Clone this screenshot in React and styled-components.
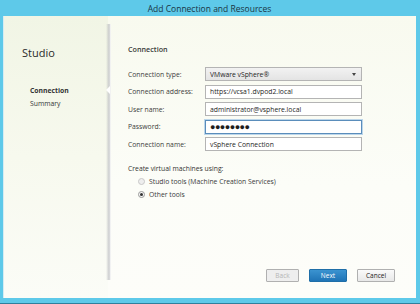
import React from 'react';
import styled, { createGlobalStyle } from 'styled-components';

const GlobalStyle = createGlobalStyle`
  html, body {
    margin: 0;
    padding: 0;
    background: #5cc7e8;
  }
  body {
    font-family: "Open Sans", "Noto Sans", sans-serif;
  }
`;

const Frame = styled.div`
  width: 420px;
  height: 304px;
  box-sizing: border-box;
  background: #5ec9e9;
  border-bottom: 1px solid #2f7f9c;
  padding: 0 4px 5px 3px;
  display: flex;
  flex-direction: column;
`;

const TitleBar = styled.div`
  height: 15px;
  display: flex;
  align-items: center;
  justify-content: center;
  font-size: 8.5px;
  color: #1a3544;
  padding-top: 1px;
`;

const Window = styled.div`
  flex: 1;
  display: flex;
  background: linear-gradient(90deg, #f3f6e6 0%, #f8faf0 40%, #fbfcf6 100%);
  border-left: 1px solid #d6ecf3;
`;

const Sidebar = styled.div`
  width: 104px;
  position: relative;
  padding: 29px 0 0 18px;
  box-sizing: border-box;
  background: linear-gradient(180deg, #f1f5e5 0%, #f7f9ee 50%, #fbfcf7 100%);

  &::after {
    content: '';
    position: absolute;
    right: -3px;
    top: 8px;
    bottom: 18px;
    width: 5px;
    background: linear-gradient(90deg, rgba(180,180,185,0) 0%, rgba(170,172,178,0.6) 60%, rgba(255,255,255,0.9) 100%);
  }
`;

const Notch = styled.div`
  position: absolute;
  right: -2px;
  top: 70px;
  width: 0;
  height: 0;
  border-top: 4px solid transparent;
  border-bottom: 4px solid transparent;
  border-right: 4px solid #ffffff;
  z-index: 2;
`;

const Brand = styled.div`
  font-size: 11px;
  color: #2a2a2a;
  margin-bottom: 24px;
`;

const Step = styled.div`
  font-size: 6.8px;
  color: #333;
  font-weight: ${({ active }) => (active ? 700 : 400)};
  padding-left: 8px;
  height: 13px;
  line-height: 13px;
`;

const Main = styled.div`
  flex: 1;
  display: flex;
  flex-direction: column;
  padding: 28px 0 0 20px;
  background: linear-gradient(180deg, #f8faef 0%, #fcfdf8 60%, #fdfdf9 100%);
`;

const Heading = styled.div`
  font-size: 7.2px;
  font-weight: 600;
  color: #3a3a3a;
  margin-bottom: 13px;
`;

const Form = styled.div`
  display: grid;
  grid-template-columns: 77px 157px;
  grid-auto-rows: 14px;
  row-gap: 3.6px;
  align-items: center;
`;

const Label = styled.label`
  font-size: 6.8px;
  color: #3c3c3c;
`;

const Field = styled.div`
  height: 14px;
  box-sizing: border-box;
  border: 1px solid ${({ focused }) => (focused ? '#5a8dbb' : '#b4b4b4')};
  box-shadow: ${({ focused }) => (focused ? '0 0 0 1px #bcd6ea' : 'none')};
  background: ${({ select }) => (select ? 'linear-gradient(180deg, #f2f2f2, #e4e4e4)' : '#ffffff')};
  display: flex;
  align-items: center;
  justify-content: space-between;
  padding: 0 5px 0 4px;
  font-size: 6.8px;
  color: #1e1e1e;
`;

const Dots = styled.span`
  font-size: 9px;
  letter-spacing: -0.5px;
  line-height: 1;
`;

const Caret = styled.span`
  width: 0;
  height: 0;
  border-left: 2.5px solid transparent;
  border-right: 2.5px solid transparent;
  border-top: 3px solid #444;
`;

const Section = styled.div`
  font-size: 6.8px;
  color: #333;
  margin-top: 13px;
`;

const Options = styled.div`
  display: flex;
  flex-direction: column;
  gap: 4px;
  padding: 4px 0 0 10px;
`;

const Option = styled.div`
  display: flex;
  align-items: center;
  gap: 4px;
  font-size: 6.8px;
  color: #3a3a3a;
`;

const Radio = styled.span`
  width: 7px;
  height: 7px;
  border-radius: 50%;
  box-sizing: border-box;
  border: 1px solid ${({ disabled }) => (disabled ? '#c8c8c8' : '#9a9a9a')};
  background: ${({ disabled }) => (disabled ? '#eeeeee' : '#f7f7f7')};
  display: flex;
  align-items: center;
  justify-content: center;

  &::after {
    content: '';
    width: 3px;
    height: 3px;
    border-radius: 50%;
    background: ${({ checked }) => (checked ? '#333' : 'transparent')};
  }
`;

const Footer = styled.div`
  margin-top: auto;
  display: flex;
  justify-content: flex-end;
  gap: 10px;
  padding: 0 21px 16px 0;
`;

const Button = styled.button`
  width: ${({ wide }) => (wide ? '38px' : '33px')};
  height: 13px;
  box-sizing: border-box;
  padding: 0;
  font-family: inherit;
  font-size: 6.5px;
  border-radius: 1px;
  border: 1px solid ${({ primary }) => (primary ? '#1f6ea8' : '#b0b0b0')};
  background: ${({ primary, disabled }) =>
    primary
      ? 'linear-gradient(180deg, #3b93d0, #1f74b6)'
      : disabled
      ? '#eeeeee'
      : 'linear-gradient(180deg, #fafafa, #e8e8e8)'};
  color: ${({ primary, disabled }) => (primary ? '#ffffff' : disabled ? '#b5b5b5' : '#222')};
`;

const App = () => (
  <>
    <GlobalStyle />
    <Frame>
      <TitleBar>Add Connection and Resources</TitleBar>
      <Window>
        <Sidebar>
          <Notch />
          <Brand>Studio</Brand>
          <Step active>Connection</Step>
          <Step>Summary</Step>
        </Sidebar>
        <Main>
          <Heading>Connection</Heading>
          <Form>
            <Label>Connection type:</Label>
            <Field select>
              <span>VMware vSphere®</span>
              <Caret />
            </Field>
            <Label>Connection address:</Label>
            <Field>https://vcsa1.dvpod2.local</Field>
            <Label>User name:</Label>
            <Field>administrator@vsphere.local</Field>
            <Label>Password:</Label>
            <Field focused>
              <Dots>●●●●●●●●</Dots>
            </Field>
            <Label>Connection name:</Label>
            <Field>vSphere Connection</Field>
          </Form>
          <Section>Create virtual machines using:</Section>
          <Options>
            <Option>
              <Radio disabled />
              Studio tools (Machine Creation Services)
            </Option>
            <Option>
              <Radio checked />
              Other tools
            </Option>
          </Options>
          <Footer>
            <Button disabled>Back</Button>
            <Button primary wide>Next</Button>
            <Button wide>Cancel</Button>
          </Footer>
        </Main>
      </Window>
    </Frame>
  </>
);

export default App;
